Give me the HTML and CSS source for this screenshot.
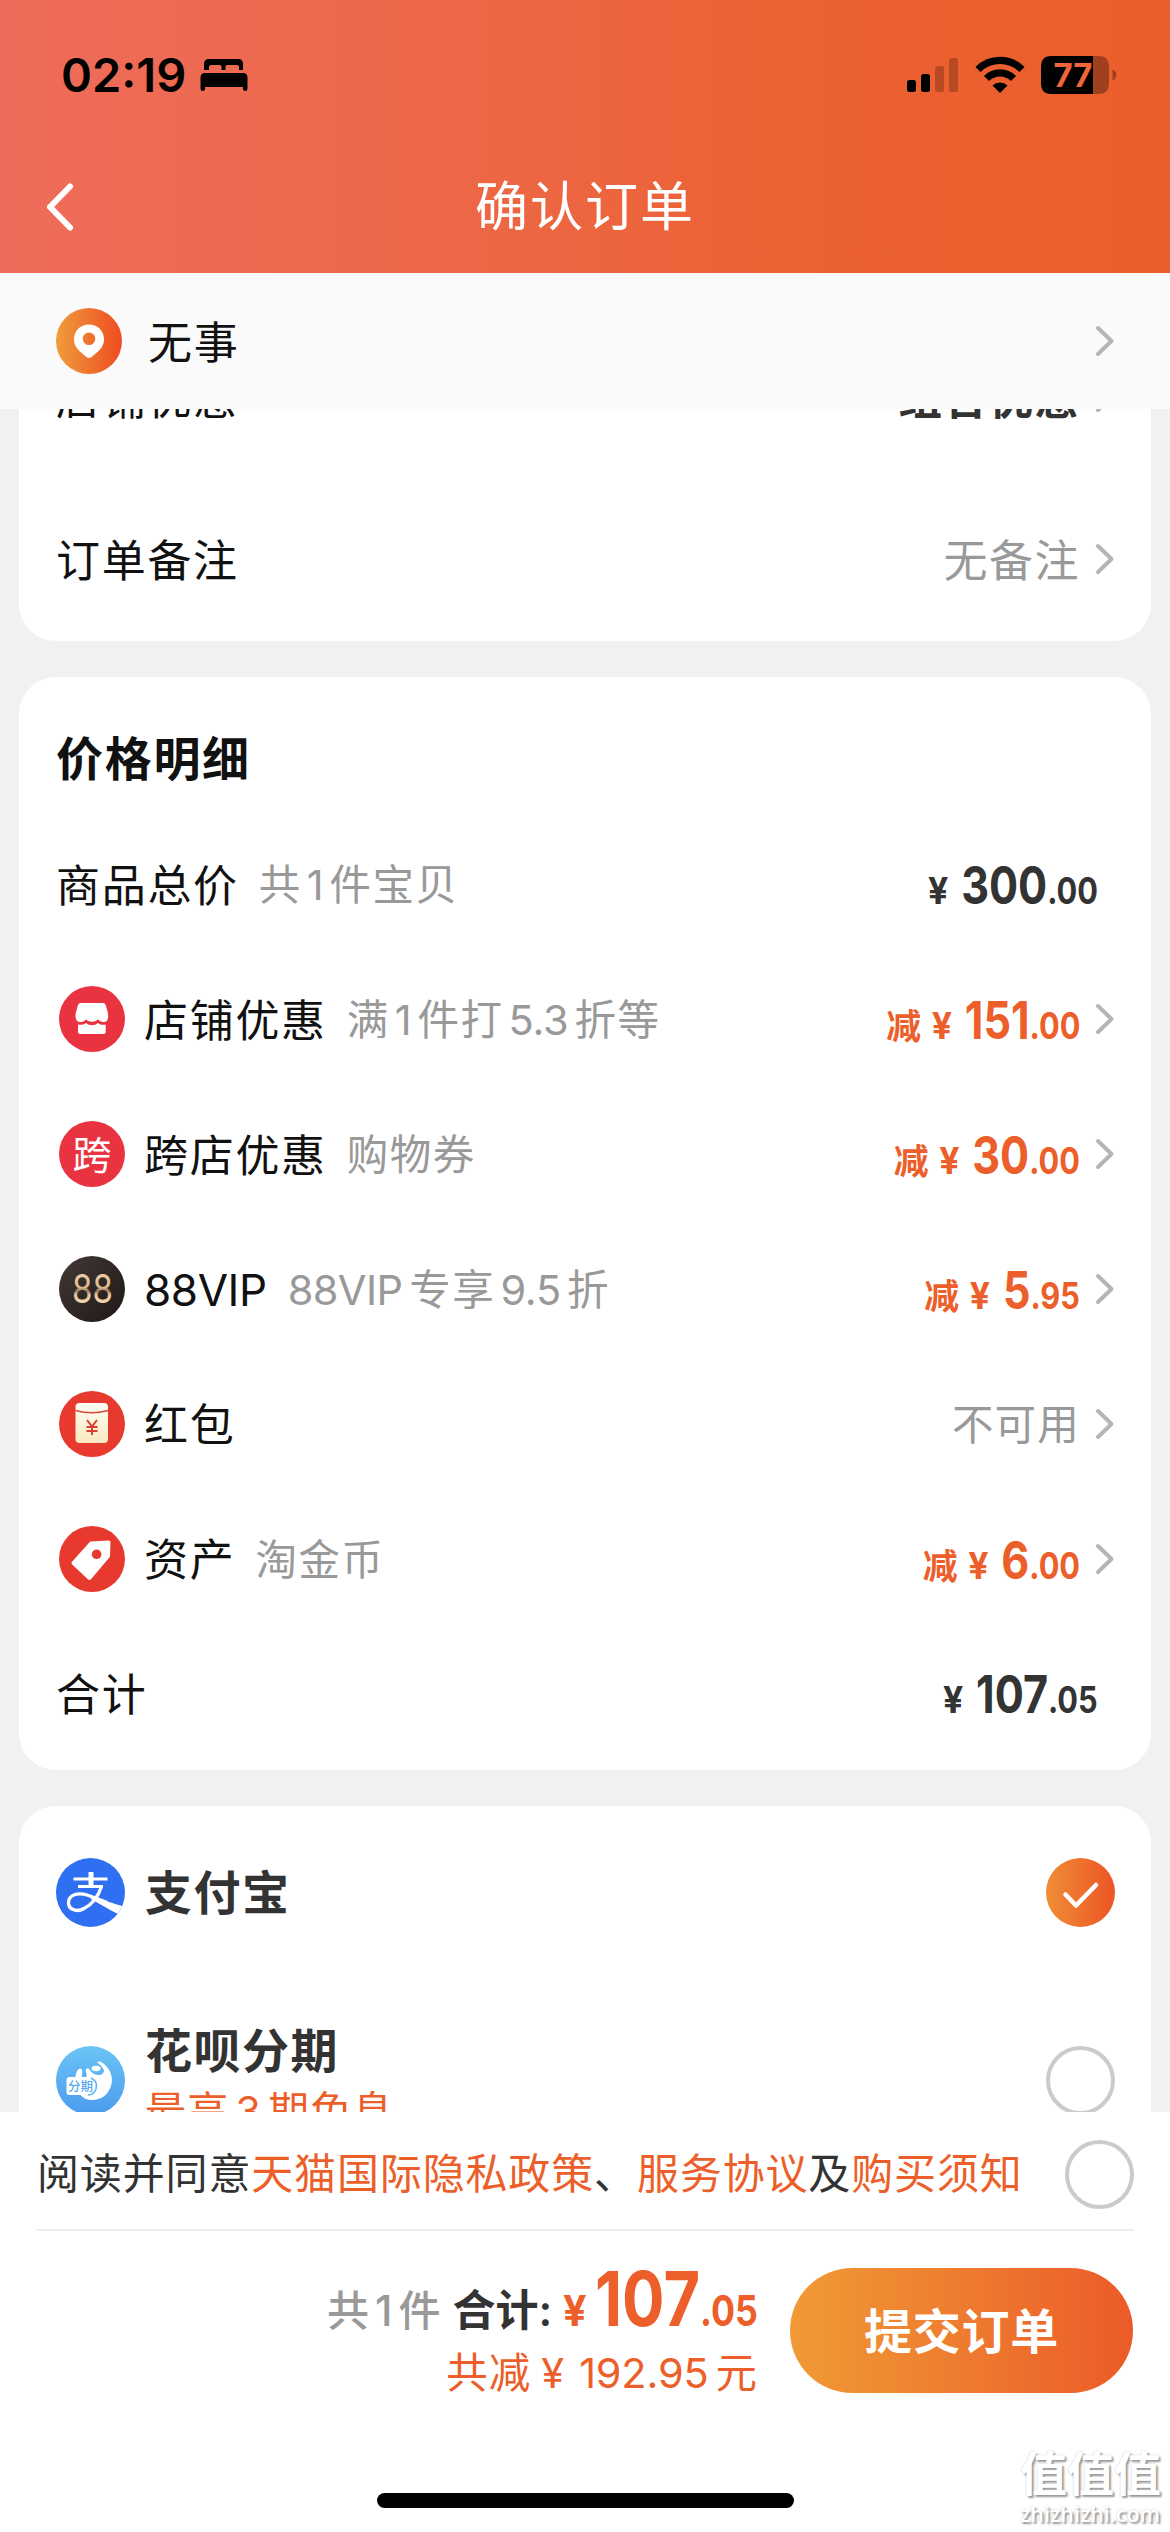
FILE: index.html
```html
<!DOCTYPE html>
<html lang="zh-CN">
<head>
<meta charset="utf-8">
<title>确认订单</title>
<link rel="stylesheet" href="styles.css">
</head>
<body>
<svg class="defs" width="0" height="0">
  <symbol id="chev" viewBox="0 0 20 32"><path d="M3 3 16.5 16 3 29" fill="none" stroke="#b5b5b5" stroke-width="4" stroke-linecap="round" stroke-linejoin="round"/></symbol>
</svg>
<div class="screen">
  <header class="header">
    <div class="status">
      <span class="time">02:19</span>
      <svg class="bed" width="48" height="34" viewBox="0 0 48 34"><path d="M4 12V6q0-5 5-5h29q5 0 5 5v6h-4V9q0-2-2-2H27q-1.500 0-1.500 2v3h-4V9q0-2-1.500-2h-9q-2 0-2 2v3zM5 15h38q4.500 0 4.500 5v11q0 2-2.200 2t-2.300-2v-2H5v2q0 2-2.300 2T.5 31V20q0-5 4.500-5z"/></svg>
      <svg class="signal" width="52" height="36" viewBox="0 0 52 36"><rect x="0" y="23" width="9" height="12" rx="2.500"/><rect x="14" y="17" width="9" height="18" rx="2.500"/><g opacity=".22"><rect x="28" y="9" width="9" height="26" rx="2.500"/><rect x="42" y="1" width="9" height="34" rx="2.500"/></g></svg>
      <svg class="wifi" width="50" height="37" viewBox="0 0 50 37"><path d="M3 13.500a31 31 0 0 1 44 0M11.500 22.500a19 19 0 0 1 27 0" fill="none" stroke="#000" stroke-width="7.200"/><path d="M17.500 29.500a11 11 0 0 1 15 0L25 37z"/></svg>
      <svg class="battery" width="76" height="38" viewBox="0 0 76 38"><path d="M52 0h6q10 0 10 11v16q0 11-10 11h-6zM71.500 13.500q4 1.500 4 5.500t-4 5.500z" opacity=".32"/><path d="M10 0h42v38H10Q0 38 0 27V11Q0 0 10 0z"/><text x="12.500" y="31" textLength="39" lengthAdjust="spacingAndGlyphs" class="pct">77</text></svg>
    </div>
    <div class="titlebar">
      <svg class="back" width="30" height="50" viewBox="0 0 30 50"><path d="M25 4.500 5 25 25 45.500" fill="none" stroke="#fff" stroke-width="6" stroke-linecap="round" stroke-linejoin="round"/></svg>
      <h1>确认订单</h1>
    </div>
  </header>

  <div class="address">
    <svg width="66" height="66" viewBox="0 0 66 66"><defs><linearGradient id="og"><stop offset="0" stop-color="#f09c3c"/><stop offset="1" stop-color="#ee4c20"/></linearGradient></defs><circle cx="33" cy="33" r="33" fill="url(#og)"/><path fill="#fff" fill-rule="evenodd" d="M33 16.500c9 0 15 6.500 15 15 0 8-6.500 12.500-12.500 17.500q-2.500 2-5 0C24.500 44 18 39.500 18 31.500c0-8.500 6-15 15-15zM33 24.500a6.300 6.300 0 1 0 0 12.600 6.300 6.300 0 0 0 0-12.600z"/></svg>
    <span class="label">无事</span>
    <svg class="chev"><use href="#chev"/></svg>
  </div>

  <main class="content">
    <section class="card options">
      <div class="row tall"><span class="label">店铺优惠</span><span class="value strong">组合优惠</span><svg class="chev"><use href="#chev"/></svg></div>
      <div class="row tall"><span class="label">订单备注</span><span class="value">无备注</span><svg class="chev"><use href="#chev"/></svg></div>
    </section>

    <section class="card prices">
      <h2>价格明细</h2>
      <div class="row"><span class="label">商品总价</span><span class="note">共<i>1</i>件宝贝</span><span class="amount dark"><em>¥</em><b>300</b>.00</span></div>
      <div class="row"><svg class="icon" viewBox="0 0 66 66"><circle cx="33" cy="33" r="33" fill="#ea3340"/><path fill="#fff" d="M22 17h22q2 0 2.700 2l2 7c1.500 7-.5 10-4 10-3 0-4-1.500-6-2.500-3 3-8.500 3-11.500 0-3 3-5 2.500-6.200 2.500-3.500 0-5.500-4-4-10l2-7q.7-2 3-2zM19 38.500c3 .8 5 .3 8.200-1.500 3 3 8.500 3 11.500 0 3 2 5 2 8 1.500V46q0 2-2 2H21q-2 0-2-2z"/></svg><span class="label">店铺优惠</span><span class="note">满<i>1</i>件打<i>5.3</i>折等</span><span class="amount"><u>减</u><em>¥</em><b>151</b>.00</span><svg class="chev"><use href="#chev"/></svg></div>
      <div class="row"><svg class="icon" viewBox="0 0 66 66"><circle cx="33" cy="33" r="33" fill="#ea3340"/><text x="33" y="47.500" text-anchor="middle" font-size="39" fill="#fff">跨</text></svg><span class="label">跨店优惠</span><span class="note">购物券</span><span class="amount"><u>减</u><em>¥</em><b>30</b>.00</span><svg class="chev"><use href="#chev"/></svg></div>
      <div class="row"><svg class="icon" viewBox="0 0 66 66"><defs><linearGradient id="gold" x2="0" y2="1"><stop offset="0" stop-color="#f4d9b4"/><stop offset=".48" stop-color="#dfb98e"/><stop offset=".55" stop-color="#8f7358"/><stop offset=".62" stop-color="#e6c59b"/><stop offset="1" stop-color="#fbe3bf"/></linearGradient><linearGradient id="coal" x2="1" y2="1"><stop offset="0" stop-color="#443a36"/><stop offset="1" stop-color="#1d1715"/></linearGradient></defs><circle cx="33" cy="33" r="33" fill="url(#coal)"/><text x="13" y="47" font-size="40" textLength="41" lengthAdjust="spacingAndGlyphs" fill="url(#gold)">88</text></svg><span class="label latin">88VIP</span><span class="note"><i class="brand">88VIP</i>专享<i>9.5</i>折</span><span class="amount"><u>减</u><em>¥</em><b>5</b>.95</span><svg class="chev"><use href="#chev"/></svg></div>
      <div class="row"><svg class="icon" viewBox="0 0 66 66"><defs><linearGradient id="cream" x2="0" y2="1"><stop offset="0" stop-color="#fffdf4"/><stop offset="1" stop-color="#fbe9c0"/></linearGradient></defs><circle cx="33" cy="33" r="33" fill="#e8392e"/><rect x="16.500" y="12" width="32.500" height="40" rx="4" fill="url(#cream)"/><path d="M16.500 19.500q16.200 4.500 32.500 0" fill="none" stroke="#d8473c" stroke-width="1.600"/><path d="m28 29 5 6.500 5-6.500M33 35.500V44M27.500 36h11M27.500 40h11" fill="none" stroke="#d8402f" stroke-width="2"/></svg><span class="label">红包</span><span class="value small">不可用</span><svg class="chev"><use href="#chev"/></svg></div>
      <div class="row"><svg class="icon" viewBox="0 0 66 66"><circle cx="33" cy="33" r="33" fill="#e8392e"/><path d="M32 17.500 49.500 16.500 49 30 30.500 52 14.500 37z" fill="#fff" stroke="#fff" stroke-width="4" stroke-linejoin="round"/><circle cx="37.600" cy="28.300" r="4.800" fill="#e8392e"/></svg><span class="label">资产</span><span class="note">淘金币</span><span class="amount"><u>减</u><em>¥</em><b>6</b>.00</span><svg class="chev"><use href="#chev"/></svg></div>
      <div class="row"><span class="label">合计</span><span class="amount dark"><em>¥</em><b>107</b>.05</span></div>
    </section>

    <section class="card pay">
      <div class="method"><svg width="69" height="69" viewBox="0 0 69 69"><defs><clipPath id="disc"><circle cx="34.500" cy="34.500" r="34.500"/></clipPath></defs><g clip-path="url(#disc)"><rect width="69" height="69" fill="#2f6ff2"/><path d="M17.500 21h34M22 28.500h25" stroke="#fff" stroke-width="2.800"/><path d="M35 14v15" stroke="#fff" stroke-width="5"/><path d="M45.500 28.500C42 39 35 47 28 50.500 20 55 12 51 12.500 44c.5-7 9-10 18.500-7 9 3 14 5 20 7.500" fill="none" stroke="#fff" stroke-width="3.300"/><path d="M34 37c12 4 22 8.500 34 11.500l-5 8C54 52 44 46 35 41z" fill="#fff"/></g></svg><span class="name">支付宝</span><svg class="tick" width="69" height="69" viewBox="0 0 69 69"><defs><linearGradient id="og2"><stop offset="0" stop-color="#f08d35"/><stop offset="1" stop-color="#ec5526"/></linearGradient></defs><circle cx="34.500" cy="34.500" r="34.500" fill="url(#og2)"/><path d="m19.500 36.500 10.500 11 20-20.500" fill="none" stroke="#fff" stroke-width="4.500" stroke-linecap="round" stroke-linejoin="round"/></svg></div>
      <div class="method second"><svg width="69" height="69" viewBox="0 0 69 69"><defs><linearGradient id="sky" x2="0" y2="1"><stop offset="0" stop-color="#6cc4f5"/><stop offset="1" stop-color="#4a9bee"/></linearGradient></defs><circle cx="34.500" cy="34.500" r="34.500" fill="url(#sky)"/><path fill="#fff" d="M41 16c2-1.500 5 0 7 2 7 6 9.500 14 7 22-3 9-10 14-19 14-5 0-9-2-11.500-5L19 32q1.500-9 5-9.500 3 0 2 6-1 5 4 3c2-3-1-6 0-8q2-3 4 1 4 5 10 4.500 4-1 4-5-2-4-7-8z"/><ellipse cx="40" cy="22.500" rx="4.500" ry="2.800" fill="#fff"/><rect x="10.500" y="31" width="30" height="18" rx="3" fill="#fff"/><path d="M35 32q7 3 5 11-2 6-8 6" fill="none" stroke="#5fb0f1" stroke-width="1.500"/><text x="12" y="45" font-size="12.500" font-weight="500" fill="#55a8ef">分期</text></svg><div class="names"><span class="name">花呗分期</span><span class="promo">最高<i>3</i>期免息</span></div><span class="radio"></span></div>
    </section>
  </main>

  <footer class="footer">
    <div class="agree"><p>阅读并同意<a>天猫国际隐私政策</a>、<a>服务协议</a>及<a>购买须知</a></p><span class="radio"></span></div>
    <div class="submit">
      <div class="totals">
        <div class="sum"><span class="count">共<i>1</i>件</span><span class="sumlabel">合计:</span><span class="amount big"><em>¥</em><b>107</b>.05</span></div>
        <div class="saved">共减<span class="yen">¥</span><span class="num">192.95</span>元</div>
      </div>
      <button type="button">提交订单</button>
    </div>
    <div class="home"></div>
    <div class="watermark"><span class="wm">值值值</span><span class="url">zhizhizhi.com</span></div>
  </footer>
</div>
</body>
</html>
```
FILE: styles.css
```css
* { box-sizing: border-box; margin: 0; padding: 0; }
body {
  font-family: Inter, "Noto Sans CJK SC", sans-serif;
  background: #f1f1f1;
  color: #111;
}
i, em, u { font-style: normal; text-decoration: none; }
svg { display: block; flex: none; }
.defs { position: absolute; }
.screen { width: 1170px; height: 2532px; display: flex; flex-direction: column; overflow: hidden; }

/* header */
.header { flex: none; height: 273px; background: linear-gradient(90deg, #ee6c5b 0%, #ed6745 42%, #ec6132 70%, #eb5e2c 100%); }
.status { height: 149px; padding: 0 53px 0 61px; display: flex; align-items: center; }
.time { font-size: 47px; font-weight: 600; color: #000; letter-spacing: 0; width: 139px; white-space: nowrap; }
.signal { margin-left: auto; }
.wifi { margin-left: 16px; }
.battery { margin-left: 16px; }
.pct { font: 700 33px Inter, sans-serif; fill: #f0663a; }
.titlebar { height: 116px; display: grid; grid-template-columns: 1fr auto 1fr; align-items: center; padding: 0 45px; }
h1 { font-size: 53px; font-weight: 400; letter-spacing: 2px; color: #fff; line-height: 80px; }

/* address */
.address { flex: none; height: 136px; background: #fafafa; display: flex; align-items: center; padding: 0 55px 0 56px; }
.address .label { margin-left: 26px; padding: 0 0 3px; }
.chev { width: 20px; height: 32px; margin-left: 15px; }
.address .chev { margin-left: auto; }

/* cards */
.content { flex: none; height: 1703px; overflow: hidden; padding: 0 19px; display: flex; flex-direction: column; gap: 36px; }
.card { flex: none; background: #fff; border-radius: 37px; padding: 0 36px 0 37px; }
.options { margin-top: -93px; height: 325px; }
.row { display: flex; align-items: center; height: 134.850px; line-height: 60px; white-space: nowrap; }
.row.tall { height: 162px; }
.label { font-size: 44px; letter-spacing: 1.700px; padding-top: 3px; }
.label.latin { letter-spacing: -.4px; }
.icon { width: 66px; height: 66px; margin: 0 19px 0 3px; }
.note { font-size: 41.500px; letter-spacing: 1.500px; color: #999; margin-left: 20px; padding-top: 2px; }
.note i { letter-spacing: -.2px; margin: 0 6px 0 5px; }
.note .brand { margin: 0 7px 0 1px; letter-spacing: -.6px; }
.value { margin-left: auto; font-size: 44px; letter-spacing: 1.500px; color: #999; padding-top: 3px; }
.value.small { font-size: 41.500px; letter-spacing: 1.200px; }
.value.strong { font-weight: 700; color: #333; }

.amount { margin-left: auto; font-size: 37px; font-weight: 700; color: #ec5f2a; transform: scaleX(.83); transform-origin: right; padding-top: 9px; }
.amount b { font-size: 52px; font-weight: 700; }
.amount em { display: inline-block; transform: scaleX(1.160); margin-right: 17px; }
.amount u { font-size: 35px; margin-right: 18px; display: inline-block; transform: scaleX(1.200); }
.amount.dark { color: #333; margin-right: 17px; }

.prices { height: 1093px; padding-top: 24px; }
h2 { font-size: 47px; font-weight: 700; letter-spacing: 1.700px; line-height: 114px; padding-top: 1px; height: 116px; }

.pay { height: 400px; padding-top: 52px; }
.method { display: flex; align-items: center; height: 69px; }
.method.second { margin-top: 119px; }
.name { font-size: 47px; font-weight: 600; letter-spacing: 1.500px; color: #333; line-height: 60px; }
.method .name { margin-left: 20px; }
.tick, .radio { margin-left: auto; }
.names { display: flex; flex-direction: column; }
.promo { font-size: 41px; letter-spacing: 1.200px; color: #ec5f2a; line-height: 60px; margin-left: 20px; }
.promo i { margin: 0 6px; }
.radio { width: 69px; height: 69px; flex: none; border: 4px solid #cbcbcb; border-radius: 50%; }

/* footer */
.footer { flex: none; height: 420px; background: #fff; position: relative; }
.agree { height: 119px; margin: 0 36px; border-bottom: 2px solid #eee; display: flex; align-items: center; padding-top: 8px; }
.agree p { font-size: 42px; letter-spacing: .85px; color: #333; white-space: nowrap; line-height: 60px; margin-left: 1px; padding-bottom: 2px; }
.agree a { color: #ec5f2a; }
.submit { display: flex; justify-content: flex-end; align-items: flex-start; padding: 37px 37px 0 0; gap: 32px; }
.totals { display: flex; flex-direction: column; align-items: flex-end; white-space: nowrap; margin-top: -5px; }
.sum { display: flex; align-items: baseline; line-height: 62px; }
.count { font-size: 42px; font-weight: 500; color: #999; letter-spacing: 1px; margin-right: 11px; }
.count i { margin: 0 5px; }
.sumlabel { font-size: 43px; font-weight: 600; color: #333; margin-right: -27px; }
.big { font-size: 43px; padding-top: 4px; }
.big b { font-size: 76px; }
.big em { margin-right: 12px; }
.saved { font-size: 41.500px; color: #ec5f2a; line-height: 60px; letter-spacing: 1px; margin-top: 1px; }
.yen { margin: 0 14px 0 10px; }
.num { letter-spacing: -.2px; margin-right: 7px; }
button { width: 343px; height: 125px; padding-bottom: 5px; border: 0; border-radius: 63px; background: linear-gradient(90deg, #f19a36, #ee7f30 45%, #ec5a28); color: #fff; font: 600 48px Inter, "Noto Sans CJK SC", sans-serif; letter-spacing: .8px; }
.home { position: absolute; left: 377px; top: 381px; width: 417px; height: 15px; border-radius: 8px; background: #000; }
.watermark { position: absolute; right: 7px; top: 332px; width: 143px; display: flex; flex-direction: column; color: #fff; text-shadow: 2px 2px 2px #999, 0 0 2px #ccc; white-space: nowrap; }
.wm { font-size: 47px; font-weight: 700; line-height: 60px; }
.url { font: 600 21.500px/20px "Open Sans", sans-serif; }
```
